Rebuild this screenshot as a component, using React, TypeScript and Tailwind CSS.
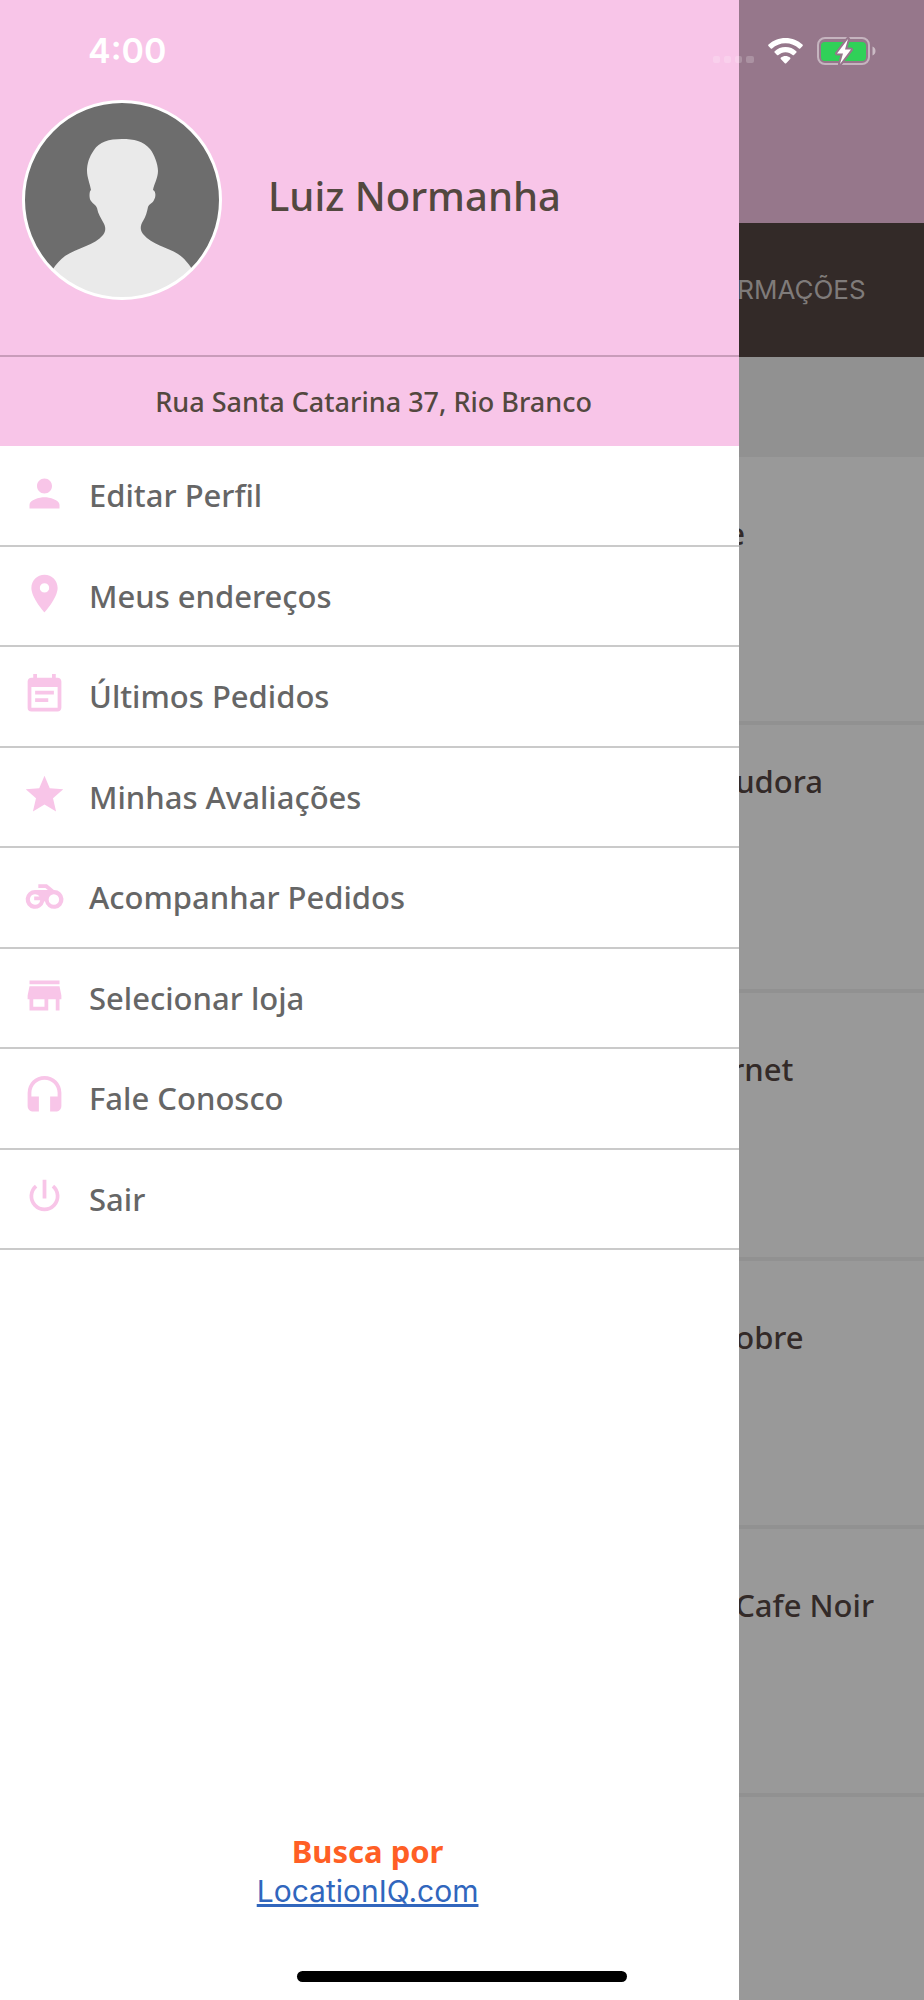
import { clsx } from 'clsx';
import type { ComponentType } from 'react';
import { MdEventNote, MdHeadset, MdPerson, MdPlace, MdStar, MdStore } from 'react-icons/md';

interface IconProps {
  className?: string;
}

interface MenuItem {
  label: string;
  icon: ComponentType<IconProps>;
}

function MotorcycleIcon({ className }: IconProps) {
  return (
    <svg viewBox="0 0 24 24" fill="currentColor" className={className} aria-hidden="true">
      <path
        fillRule="evenodd"
        d="M17 9.100L13.300 6H8.700V8H12.500L13.800 9.100H7A5 5 0 1 0 11.800 15.300L12.200 14.900A5 5 0 1 0 17 9.100ZM7 16.900A2.800 2.800 0 1 1 9.300 12.500H6.500V14.500H9.700A2.800 2.800 0 0 1 7 16.900ZM17 16.900A2.800 2.800 0 1 1 17 11.300A2.800 2.800 0 0 1 17 16.900Z"
      />
    </svg>
  );
}

function PowerIcon({ className }: IconProps) {
  return (
    <svg viewBox="0 0 24 24" fill="none" stroke="currentColor" strokeWidth="2" className={className} aria-hidden="true">
      <path d="M12 3V13M7.500 6.500A7 7 0 1 0 16.500 6.500" />
    </svg>
  );
}

const menuItems: MenuItem[] = [
  { label: 'Editar Perfil', icon: MdPerson },
  { label: 'Meus endereços', icon: MdPlace },
  { label: 'Últimos Pedidos', icon: MdEventNote },
  { label: 'Minhas Avaliações', icon: MdStar },
  { label: 'Acompanhar Pedidos', icon: MotorcycleIcon },
  { label: 'Selecionar loja', icon: MdStore },
  { label: 'Fale Conosco', icon: MdHeadset },
  { label: 'Sair', icon: PowerIcon },
];

const products = [
  { title: 'e', indent: '-ml-3' },
  { title: 'udora', indent: '-ml-1', twoLines: true },
  { title: 'rnet', indent: '-ml-2' },
  { title: 'obre', indent: '-ml-1' },
  { title: 'Cafe Noir', indent: '-ml-1' },
];

function Avatar() {
  return (
    <svg viewBox="0 0 200 200" className="size-[200px] shrink-0" aria-hidden="true">
      <clipPath id="avatar-clip">
        <circle cx="100" cy="100" r="98" />
      </clipPath>
      <circle cx="100" cy="100" r="99" fill="#6d6d6d" />
      <path
        clipPath="url(#avatar-clip)"
        fill="#eaeaea"
        d="M100 39C87 39 77 42 72 50C67 57 65 64 65 71C65 77 68 84 69 90C67 91 67 99 69 101C71 104 74 105 75 108C76 114 79 118 81 122C84 127 84 131 81 135C73 145 55 148 43 156C38 160 34 164 31 169L31 200H170V169C166 163 163 159 156 154C145 147 130 145 121 134C118 130 118 126 121 121C124 116 125 112 126 107C127 104 131 103 132 100C134 97 134 91 131 90C132 84 136 78 136 71C136 64 132 54 128 49C121 41 112 39 100 39Z"
      />
      <circle cx="100" cy="100" r="98.500" fill="none" stroke="#fff" strokeWidth="3" />
    </svg>
  );
}

function StatusBar() {
  return (
    <div className="pointer-events-none absolute inset-x-0 top-0 flex h-[101px] items-center justify-between pr-12 pl-[88px] text-white">
      <span className="font-['Inter'] text-[34px] leading-10 font-semibold">4:00</span>
      <div className="flex items-center gap-[14px]">
        {/* Signal */}
        <svg viewBox="0 0 42 28" className="h-7 w-[42px]" fill="#fff" fillOpacity="0.2" aria-hidden="true">
          <rect x="1" y="19" width="7" height="7" rx="2" />
          <rect x="12" y="19" width="7" height="7" rx="2" />
          <rect x="23" y="19" width="7" height="7" rx="2" />
          <rect x="34" y="19" width="8" height="7" rx="2" />
        </svg>
        {/* Wi-Fi */}
        <svg viewBox="0 0 35 28" className="h-7 w-[35px]" fill="#fff" aria-hidden="true">
          <path d="M17.500 1C10.900 1 4.900 3.500 0.500 7.600C0 8.100 0 8.600 0.400 9L2.800 11.400C3.200 11.800 3.700 11.800 4.100 11.400C7.600 8.200 12.300 6.200 17.500 6.200S27.400 8.200 30.900 11.400C31.300 11.800 31.800 11.800 32.200 11.400L34.600 9C35 8.600 35 8.100 34.500 7.600C30.100 3.500 24.100 1 17.500 1Z" />
          <path d="M17.500 10C13.300 10 9.500 11.600 6.700 14.200C6.200 14.700 6.200 15.200 6.600 15.600L9 18C9.400 18.400 9.900 18.400 10.400 18C12.300 16.300 14.700 15.200 17.500 15.200S22.700 16.300 24.600 18C25.100 18.400 25.600 18.400 26 18L28.400 15.600C28.800 15.200 28.800 14.700 28.300 14.200C25.500 11.600 21.700 10 17.500 10Z" />
          <path d="M17.500 19C15.700 19 14.200 19.600 12.900 20.600C12.400 21 12.400 21.500 12.800 21.900L16.800 26.200C17.200 26.700 17.800 26.700 18.200 26.200L22.200 21.900C22.600 21.500 22.600 21 22.100 20.600C20.800 19.600 19.300 19 17.500 19Z" />
        </svg>
        {/* Battery */}
        <svg viewBox="0 0 59 28" className="h-7 w-[59px]" aria-hidden="true">
          <rect x="1" y="1" width="51" height="26" rx="7" fill="none" stroke="#fff" strokeOpacity="0.45" strokeWidth="2" />
          <path d="M55.500 9.500C59.500 11 59.500 17 55.500 18.500Z" fill="#fff" fillOpacity="0.5" />
          <rect x="4" y="5" width="45" height="19" rx="4" fill="#30d158" />
          <path
            d="M31 2L20 16.500H26L23 27L34 12.500H28Z"
            fill="#fff"
            stroke="#96778b"
            strokeWidth="4"
            strokeLinejoin="round"
            paintOrder="stroke"
          />
        </svg>
      </div>
    </div>
  );
}

function Drawer() {
  return (
    <aside className="flex w-4/5 shrink-0 flex-col bg-white">
      <header className="bg-[#f8c5e8] text-[#53483f]">
        <div className="flex h-[357px] items-start gap-[46px] border-b-2 border-[#c99cba] pt-[100px] pl-[22px]">
          <Avatar />
          <div className="flex h-[200px] items-center pb-2">
            <h1 className="text-[40px] leading-[60px] font-medium">Luiz Normanha</h1>
          </div>
        </div>
        <p className="flex h-[89px] items-center justify-center pl-2 text-[27px] leading-10 font-medium">
          Rua Santa Catarina 37, Rio Branco
        </p>
      </header>

      <nav className="grid h-[804px] grid-rows-8">
        {menuItems.map(({ label, icon: Icon }) => (
          <button
            key={label}
            type="button"
            className="flex items-center gap-[22px] border-b-2 border-[#cacaca] pl-[22px] text-left text-[31px] leading-10 font-medium text-[#666]"
          >
            <Icon className="mb-1 size-[45px] shrink-0 text-[#f8c5e8]" />
            {label}
          </button>
        ))}
      </nav>

      <footer className="mt-auto flex flex-col items-center pr-1 pb-[89px] leading-10">
        <span className="text-[31px] font-bold text-[#ff5f25]">Busca por</span>
        <a href="#locationiq" className="font-['Inter'] text-[30px] text-[#3166bd] underline">
          LocationIQ.com
        </a>
      </footer>
    </aside>
  );
}

// Store page, dimmed while the drawer is open
function StorePage() {
  return (
    <main className="min-w-0 flex-1 overflow-hidden bg-[#999] text-[#332a28]">
      <div className="h-[223px] bg-[#96778b]" />
      <div className="flex h-[134px] items-center bg-[#332a28]">
        <span className="-ml-0.5 font-['Inter'] text-[26px] leading-10 text-[#7f7b7a]">RMAÇÕES</span>
      </div>
      <div className="h-[100px] bg-[#919191]" />
      <ul>
        {products.map(({ title, indent, twoLines }) => (
          <li key={title} className="h-[268px] border-b-4 border-[#919191] pt-9">
            <div className="flex h-20 flex-col justify-center">
              <h2
                className={clsx('text-[31px] leading-10 font-medium whitespace-nowrap', indent, twoLines && 'h-20')}
              >
                {title}
              </h2>
            </div>
          </li>
        ))}
      </ul>
    </main>
  );
}

export default function App() {
  return (
    <div className="relative flex min-h-screen font-['Noto_Sans',sans-serif]">
      <Drawer />
      <StorePage />
      <StatusBar />
      {/* Home indicator */}
      <div className="absolute bottom-[18px] left-1/2 h-[11px] w-[330px] -translate-x-1/2 rounded-full bg-black" />
    </div>
  );
}
